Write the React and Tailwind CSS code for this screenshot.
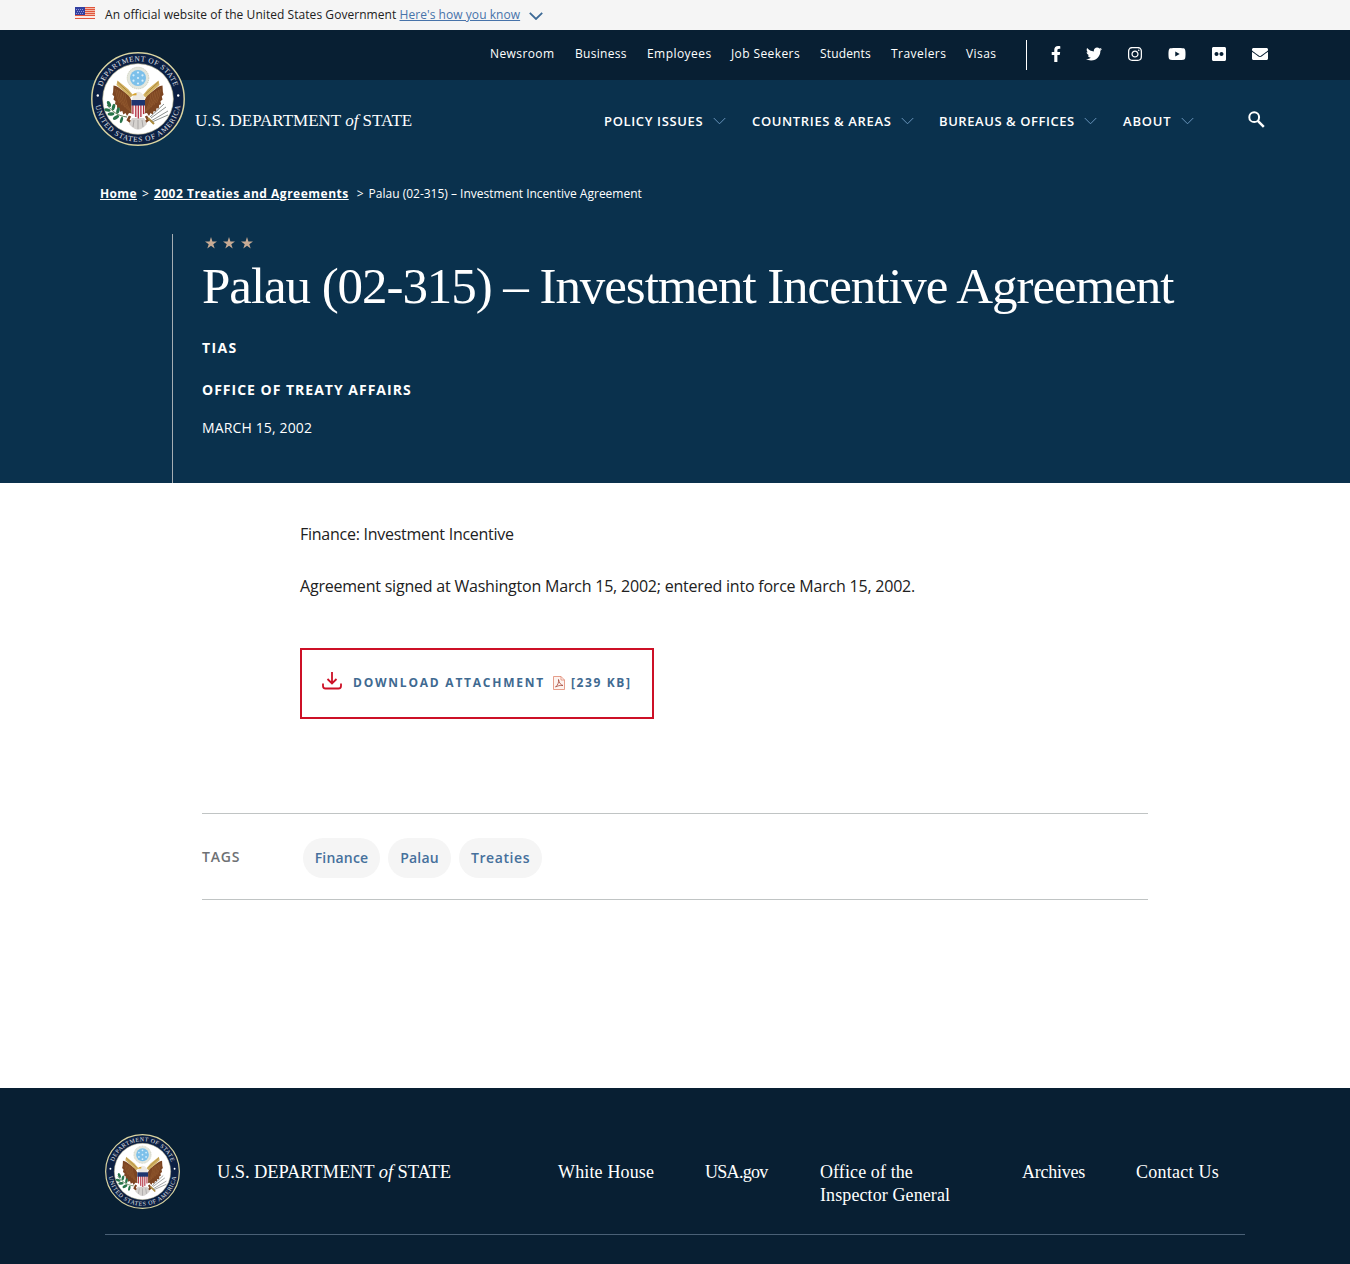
import React from "react";
import { FaFacebookF, FaTwitter, FaInstagram, FaYoutube, FaFlickr, FaEnvelope } from "react-icons/fa";

const FEATHERS = [0, 1, 2, 3, 4, 5];

function Wing() {
  return (
    <g>
      <path d="M22.500 33.500c3 0 6.500 3 9 5l6.500 5 3 6v12l-3-.5-2 3-1.500-3-2.200 1.500-1-3.500-2.200 .8-.6-3.500-2.300 .3-.3-3.500-1.900-.8 .5-3-2-1.800 .7-2.900-1.800-2 .7-2.500z" fill="#7c4522" />
      {FEATHERS.map((i) => (
        <path key={i} d={`M${24.5 + i * 1.9} ${37 + i * 0.9}q1 ${8 + i} ${4 + i * 0.8} ${14 + i * 1.3}`} fill="none" stroke="#a8703c" strokeWidth="0.4" />
      ))}
      <path d="M26.500 28.500l10.500 8.500 5 6-2.500 2.500-6-5.500-8-7z" fill="#d3b262" />
      <path d="M26.500 30l13 12" stroke="#8e6d2a" strokeWidth="0.6" />
    </g>
  );
}

function Seal({ className, id }) {
  return (
    <svg viewBox="0 0 94 94" className={className} role="img" aria-label="Seal of the Department of State">
      <defs>
        <path id={`${id}-top`} d="M9.100 47a37.900 37.900 0 0 1 75.800 0" />
        <path id={`${id}-bottom`} d="M4.200 47a42.800 42.800 0 0 0 85.600 0" />
      </defs>
      <circle cx="47" cy="47" r="46.200" fill="#0c2043" stroke="#d9d3a0" strokeWidth="1.500" />
      <circle cx="47" cy="47" r="35.300" fill="#fff" stroke="#c9c29a" strokeWidth="0.6" />
      <g fill="#e3e6ec" fontFamily="Liberation Serif, serif" fontSize="7.400">
        <text>
          <textPath href={`#${id}-top`} startOffset="12.500" textLength="94">DEPARTMENT OF STATE</textPath>
        </text>
        <text>
          <textPath href={`#${id}-bottom`} startOffset="6.500" textLength="121">UNITED STATES OF AMERICA</textPath>
        </text>
      </g>
      <circle cx="6.800" cy="43.500" r="1.200" fill="#fff" />
      <circle cx="87.200" cy="43.500" r="1.200" fill="#fff" />
      <circle cx="47" cy="26" r="10.800" fill="#e3e6dd" stroke="#c4c6b0" strokeWidth="0.8" strokeDasharray="1.200 0.8" />
      <circle cx="47" cy="26" r="8" fill="#7cc0ea" />
      <g fill="#d9eefb">
        <circle cx="47" cy="20.500" r="1.100" /><circle cx="42.500" cy="23.300" r="1.100" /><circle cx="51.500" cy="23.300" r="1.100" />
        <circle cx="47" cy="26" r="1.100" /><circle cx="42.500" cy="28.700" r="1.100" /><circle cx="51.500" cy="28.700" r="1.100" /><circle cx="47" cy="31.500" r="1.100" />
      </g>
      <Wing />
      <g transform="matrix(-1 0 0 1 94 0)"><Wing /></g>
      <path d="M39 64l-2 4 4 3M55 64l2 4-4 3" fill="none" stroke="#7c4522" strokeWidth="2.500" />
      <path d="M41 66h12l3 6-3 3-3 2-3 .8-3-.8-3-2-3-3z" fill="#d5d2cf" />
      <path d="M43 68l-1 7M47 68v9M51 68l1 7" stroke="#8e8b8b" strokeWidth="0.6" />
      <path d="M41 50c0-6 2-9 5-10 3-.6 5 1 6 3 2 3 2 5 1.500 8z" fill="#ece9e4" />
      <path d="M45.500 41c-2 0-4 1-4.500 2.600l4.500-.4z" fill="#d8a32e" />
      <path d="M40.500 49h13.500v10c0 4-3 6-6.750 7.600-3.750-1.600-6.750-3.600-6.750-7.600z" fill="#f4f2f2" />
      <path d="M41.900 52v10M44.800 52v13M47.300 52v14.500M49.900 52v13M52.600 52v10" stroke="#b32a3c" strokeWidth="1.250" />
      <path d="M40.500 48h13.500v5.500h-13.500z" fill="#1d356f" />
      <path d="M16 53c6 7 11 11 20 12" fill="none" stroke="#4d6b3e" strokeWidth="0.9" />
      <g fill="#28744a">
        <ellipse cx="18" cy="52" rx="1.700" ry="3.200" transform="rotate(-25 18 52)" />
        <ellipse cx="22.500" cy="55" rx="1.600" ry="3.200" transform="rotate(15 22.500 55)" />
        <ellipse cx="16.500" cy="58" rx="3.200" ry="1.600" transform="rotate(15 16.500 58)" />
        <ellipse cx="27" cy="58.500" rx="1.600" ry="3.200" transform="rotate(15 27 58.500)" />
        <ellipse cx="20" cy="62" rx="3.400" ry="1.700" transform="rotate(-5 20 62)" />
        <ellipse cx="25" cy="65.500" rx="3.400" ry="1.700" transform="rotate(-30 25 65.500)" />
        <ellipse cx="30.500" cy="68" rx="1.400" ry="3.200" transform="rotate(15 30.500 68)" />
      </g>
      <path d="M60 66l15-11M60 69l17-10M61 70l16-7M59 65l14-13" stroke="#8d9290" strokeWidth="1" />
      <path d="M57 66l6 6" stroke="#a98a3d" strokeWidth="2" />
    </svg>
  );
}

function Flag() {
  return (
    <svg viewBox="0 0 20 12" className="h-3 w-5" aria-label="U.S. flag">
      <path d="M0 0h20v12H0z" fill="#f3b9a8" />
      <path d="M0 .5h20M0 2.500h20M0 4.500h20M0 6.500h20M0 8.500h20M0 11.500h20" stroke="#e0553d" />
      <path d="M0 9.500h20M0 10.500h20" stroke="#fbeae5" />
      <path d="M0 0h10v8H0z" fill="#3340a0" />
      <path d="M1 2.500h8M2 4.500h8M1 6.500h8" stroke="#8d95d8" strokeDasharray="1 1" />
    </svg>
  );
}

function Chevron({ className, w = 1 }) {
  return (
    <svg viewBox="0 0 14 8" className={className} fill="none" stroke="currentColor" strokeWidth={w}>
      <path d="M.8 .8L7 7l6.200-6.200" />
    </svg>
  );
}

function Star() {
  return (
    <svg viewBox="0 0 24 24" className="size-3" fill="#c8ab94">
      <path d="M12 0l2.900 8.800H24l-7.400 5.500L19.400 23 12 17.700 4.600 23l2.800-8.700L0 8.800h9.100z" />
    </svg>
  );
}

const TOP = [
  ["Newsroom", "w-[85px] tracking-[0.4px]"], ["Business", "w-[72px] tracking-[0.3px]"],
  ["Employees", "w-[84px] tracking-[0.45px]"], ["Job Seekers", "w-[89px] tracking-[0.4px]"],
  ["Students", "w-[71px] tracking-[0.15px]"], ["Travelers", "w-[75px] tracking-[0.45px]"],
  ["Visas", "w-[60px] tracking-[0.45px]"],
];
const MAIN = [
  ["POLICY ISSUES", "w-[109px] tracking-[0.64px]", "mr-[26px]"],
  ["COUNTRIES & AREAS", "w-[149px] tracking-[0.64px]", "mr-[25px]"],
  ["BUREAUS & OFFICES", "w-[145px] tracking-[0.56px]", "mr-[26px]"],
  ["ABOUT", "w-[58px] tracking-[0.8px]", "mr-[54px]"],
];
const LINKS = [
  ["White House", "w-[147px] tracking-[0.15px]"], ["USA.gov", "w-[115px] tracking-[-0.7px]"],
  ["Office of the Inspector General", "w-[202px] pr-10 tracking-[0.1px]"],
  ["Archives", "w-[114px] tracking-[-0.25px]"], ["Contact Us", "w-[100px] tracking-[0.25px]"],
];

export default function App() {
  return (
    <div className="h-[1264px] w-[1350px] overflow-hidden bg-white font-['Open_Sans',sans-serif] text-[#212121]">
      <div className="flex h-[30px] items-start bg-[#f5f5f5] pl-[75px] pt-[7px] text-xs">
        <Flag />
        <p className="ml-2.5 whitespace-nowrap leading-4 tracking-[0.055px]">
          An official website of the United States Government <a className="text-[#4773aa] underline">Here's how you know</a>
        </p>
        <Chevron className="ml-[9px] mt-[5px] h-[8px] w-[14px] text-[#3d6a96]" w={1.800} />
      </div>

      <header className="relative h-[453px] bg-[#0a314d] text-white">
        <div className="flex h-[50px] items-center bg-[#081f33] pl-[490px] text-xs">
          {TOP.map(([t, w]) => <a key={t} className={`${w} -mt-0.5 whitespace-nowrap`}>{t}</a>)}
          <div className="h-[30px] w-px bg-white" />
          <div className="-mt-0.5 flex items-center text-base">
            <FaFacebookF className="ml-[21px] w-[16px]" />
            <FaTwitter className="ml-[22px] w-[16px]" />
            <FaInstagram className="ml-[25px] w-[16px]" />
            <FaYoutube className="ml-[25px] w-[18px]" />
            <FaFlickr className="ml-[25px] w-[16px]" />
            <FaEnvelope className="ml-[25px] w-[16px]" />
          </div>
        </div>
        <div className="flex h-[92px] items-start pl-[195px]">
          <Seal id="head" className="absolute left-[91px] top-[22px] size-[94px]" />
          <p className="mt-[29px] w-[409px] whitespace-nowrap font-['Liberation_Serif',serif] text-[17px] leading-6">
            U.S. DEPARTMENT <i>of</i> STATE
          </p>
          <nav className="flex items-center pt-[31px] text-[13px] font-semibold leading-5">
            {MAIN.map(([t, w, mr]) => (
              <React.Fragment key={t}>
                <a className={`${w} whitespace-nowrap`}>{t}</a>
                <Chevron className={`h-[8px] w-[13px] text-[#6f9bc4] ${mr}`} />
              </React.Fragment>
            ))}
          </nav>
          <svg viewBox="0 0 17 17" className="mt-[31px] size-[17px]" fill="none" stroke="#fff">
            <circle cx="6.200" cy="6.200" r="4.900" strokeWidth="2" />
            <path d="M9.800 9.800l6 6" strokeWidth="2.500" />
          </svg>
        </div>
        <div className="flex h-[62px] items-start gap-[5px] whitespace-nowrap pl-[100px] pt-[14px] text-xs leading-4">
          <a className="font-bold tracking-[0.38px] underline">Home</a>
          <span>&gt;</span>
          <a className="mr-[3px] font-bold tracking-[0.5px] underline">2002 Treaties and Agreements</a>
          <span>&gt;</span>
          <span>Palau (02-315) – Investment Incentive Agreement</span>
        </div>
        <div className="ml-[172px] h-[249px] border-l border-[#a5adb3] pl-[29px]">
          <div className="flex gap-1.5 pl-[3px] pt-[3px]"><Star /><Star /><Star /></div>
          <h1 className="mt-[7px] whitespace-nowrap font-['Liberation_Serif',serif] text-[51px] leading-[60px] tracking-[-1.06px]">
            Palau (02-315) – Investment Incentive Agreement
          </h1>
          <p className="mt-[22px] text-sm font-bold leading-5 tracking-[1.4px]">TIAS</p>
          <p className="mt-[22px] text-sm font-bold leading-5 tracking-[1px]">OFFICE OF TREATY AFFAIRS</p>
          <p className="mt-[18px] text-sm leading-5 tracking-[0.14px]">MARCH 15, 2002</p>
        </div>
      </header>

      <main className="h-[605px] pt-[38px]">
        <div className="ml-[300px] text-base leading-[26px]">
          <p className="tracking-[-0.26px]">Finance: Investment Incentive</p>
          <p className="mt-[26px] tracking-[-0.21px]">Agreement signed at Washington March 15, 2002; entered into force March 15, 2002.</p>
          <a className="mt-[49px] flex h-[71px] w-[354px] items-center whitespace-nowrap border-2 border-[#cd1026] pl-[20px] text-xs font-bold leading-4 text-[#3f6a91]">
            <svg viewBox="0 0 20 18" className="-mt-1.5 mr-[11px] h-[18px] w-5" fill="none" stroke="#cd1026" strokeWidth="1.800">
              <path d="M10 0v11M5.500 7L10 11.500 14.500 7M1 11.500V14q0 2.500 2.500 2.500h13q2.500 0 2.500-2.500v-2.500" />
            </svg>
            <span className="-mt-0.5 w-[193px] tracking-[1.77px]">DOWNLOAD ATTACHMENT</span>
            <svg viewBox="0 0 12 14" className="-mt-0.5 ml-[7px] mr-[6px] h-[14px] w-3" fill="#fdf3ef" stroke="#e0866f" strokeWidth=".8">
              <path d="M.5 .5h7.500L11.500 4v9.500H.5zM8 .5V4h3.500" />
              <path d="M2.500 11C5 9 6 6 5.500 3.500 6 7 8 9 10 9.500 7 9 4.500 10 2.500 11z" stroke="#a5483a" />
            </svg>
            <span className="-mt-0.5 tracking-[1.62px]">[239 KB]</span>
          </a>
        </div>
        <div className="ml-[202px] mt-[94px] flex h-[87px] w-[946px] items-center border-y border-[#c0c4c4] text-sm font-semibold">
          <span className="w-[101px] tracking-[0.85px] text-[#6e7174]">TAGS</span>
          <div className="mt-0.5 flex h-10 gap-2 text-[#46709c]">
            <a className="flex w-[77px] items-center justify-center rounded-[20px] bg-[#f5f5f5] tracking-[0.2px]">Finance</a>
            <a className="flex w-[63px] items-center justify-center rounded-[20px] bg-[#f5f5f5] tracking-[0.2px]">Palau</a>
            <a className="flex w-[83px] items-center justify-center rounded-[20px] bg-[#f5f5f5] tracking-[0.58px]">Treaties</a>
          </div>
        </div>
      </main>

      <footer className="h-[176px] bg-[#081f33] px-[105px] pt-[46px] font-['Liberation_Serif',serif] text-white">
        <div className="flex h-[101px] items-start border-b border-[#4a6076]">
          <Seal id="foot" className="mr-[37px] size-[75px]" />
          <p className="mt-[26px] w-[341px] whitespace-nowrap text-[18.5px] leading-6 tracking-[-0.1px]">U.S. DEPARTMENT <i>of</i> STATE</p>
          <nav className="mt-[27px] flex text-[18px] leading-[23px]">
            {LINKS.map(([t, w]) => <a key={t} className={w}>{t}</a>)}
          </nav>
        </div>
      </footer>
    </div>
  );
}
